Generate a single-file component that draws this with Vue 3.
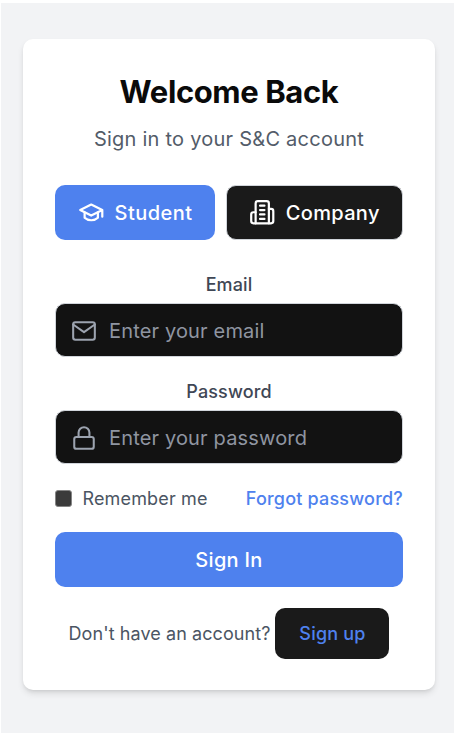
<script setup>
import { ref } from 'vue'

const role = ref('student')
const email = ref('')
const password = ref('')
const remember = ref(false)
</script>

<template>
  <main class="page">
    <section class="card">
      <h1 class="title">Welcome Back</h1>
      <p class="subtitle">Sign in to your S&amp;C account</p>

      <div class="roles">
        <button type="button" class="role student" @click="role = 'student'">
          <svg class="icon" viewBox="0 0 24 24">
            <path d="M22 10v6M2 10l10-5 10 5-10 5z" />
            <path d="M6 12v5c3 3 9 3 12 0v-5" />
          </svg>
          <span>Student</span>
        </button>
        <button type="button" class="role company" @click="role = 'company'">
          <svg class="icon" viewBox="0 0 24 24">
            <path d="M6 22V4a2 2 0 0 1 2-2h8a2 2 0 0 1 2 2v18Z" />
            <path d="M6 12H4a2 2 0 0 0-2 2v6a2 2 0 0 0 2 2h2" />
            <path d="M18 9h2a2 2 0 0 1 2 2v9a2 2 0 0 1-2 2h-2" />
            <path d="M10 6h4M10 10h4M10 14h4M10 18h4" />
          </svg>
          <span>Company</span>
        </button>
      </div>

      <form @submit.prevent>
        <label class="label" for="email">Email</label>
        <div class="field">
          <svg class="icon" viewBox="0 0 24 24">
            <rect x="2" y="4" width="20" height="16" rx="2" />
            <path d="m22 6-10 7L2 6" />
          </svg>
          <input id="email" v-model="email" type="email" placeholder="Enter your email" />
        </div>

        <label class="label second" for="password">Password</label>
        <div class="field">
          <svg class="icon" viewBox="0 0 24 24">
            <rect x="3" y="11" width="18" height="11" rx="2" />
            <path d="M7 11V7a5 5 0 0 1 10 0v4" />
          </svg>
          <input id="password" v-model="password" type="password" placeholder="Enter your password" />
        </div>

        <div class="options">
          <label class="remember">
            <input v-model="remember" type="checkbox" />
            <span>Remember me</span>
          </label>
          <a class="forgot">Forgot password?</a>
        </div>

        <button type="submit" class="submit">Sign In</button>
      </form>

      <div class="signup">
        <span class="question">Don't have an account?</span>
        <button type="button" class="signup-button">Sign up</button>
      </div>
    </section>
  </main>
</template>

<style>
body {
  background: #fff;
}
</style>

<style scoped>
* {
  box-sizing: border-box;
}
.page {
  width: 453px;
  height: 730px;
  margin: 3px 0 0 1px;
  padding: 36px 19px 0 22px;
  background: #f2f3f5;
  font-family: Inter, "Liberation Sans", sans-serif;
  display: flex;
  align-items: flex-start;
}
.card {
  width: 412px;
  height: 651px;
  padding: 0 32px;
  border-radius: 10px;
  background: #fff;
  box-shadow: 0 4px 7px -1px rgba(0, 0, 0, 0.12), 0 2px 4px -2px rgba(0, 0, 0, 0.12);
}
.title {
  margin: 34px 0 0;
  font-size: 31px;
  line-height: 38px;
  font-weight: 700;
  letter-spacing: -0.4px;
  text-align: center;
  color: #0a0a0a;
}
.subtitle {
  margin: 15px 0 0;
  font-size: 20px;
  line-height: 26px;
  letter-spacing: 0.24px;
  text-align: center;
  color: #535c69;
}
.roles {
  display: flex;
  gap: 11px;
  margin-top: 33px;
  height: 55px;
}
button {
  font-family: inherit;
  font-weight: 500;
  border: 0;
  margin: 0;
}
.role {
  display: flex;
  align-items: center;
  justify-content: center;
  gap: 10.5px;
  padding: 0;
  border-radius: 10px;
  color: #fff;
  font-size: 20px;
  letter-spacing: 0.45px;
}
.icon {
  width: 26.5px;
  height: 26.5px;
  flex: none;
  fill: none;
  stroke: currentColor;
  stroke-width: 2;
  stroke-linecap: round;
  stroke-linejoin: round;
}
.student {
  width: 160px;
  background: #4e81ee;
}
.company {
  width: 176.5px;
  background: #1a1a1a;
  border: 1px solid #d1d5db;
  letter-spacing: 0.35px;
}
.label {
  display: block;
  margin-top: 33px;
  font-size: 18px;
  line-height: 24px;
  font-weight: 500;
  letter-spacing: 0.12px;
  text-align: center;
  color: #3f4755;
}
.label.second {
  margin-top: 23px;
}
.field {
  height: 54px;
  margin-top: 6px;
  padding: 1px 0 0 15px;
  display: flex;
  align-items: center;
  gap: 12px;
  border: 1px solid #d1d5db;
  border-radius: 10px;
  background: #121212;
  color: #9ca3af;
}
.field .icon {
  width: 26px;
  height: 26px;
  stroke-width: 1.9;
}
.field input {
  flex: 1;
  min-width: 0;
  padding: 1px 0 0;
  border: 0;
  outline: 0;
  background: transparent;
  color: #fff;
  font-family: inherit;
  font-size: 20px;
  letter-spacing: 0.16px;
}
.field input::placeholder {
  color: #8f95a1;
}
.options {
  height: 24px;
  margin-top: 22px;
  display: flex;
  align-items: center;
  justify-content: space-between;
  font-size: 18px;
}
.remember {
  display: flex;
  align-items: center;
  gap: 10.5px;
  letter-spacing: 0.15px;
  color: #4b5563;
}
.remember input {
  appearance: none;
  width: 17px;
  height: 17px;
  margin: 0;
  border: 1px solid #858585;
  border-radius: 3px;
  background: #3b3b3b;
}
.forgot {
  font-weight: 500;
  letter-spacing: 0.2px;
  color: #4e81ee;
}
.submit {
  display: block;
  width: 100%;
  height: 55px;
  margin-top: 22px;
  border-radius: 10px;
  background: #4e81ee;
  color: #fff;
  font-size: 20px;
  letter-spacing: 0.3px;
}
.signup {
  margin-top: 21px;
  display: flex;
  align-items: center;
  justify-content: center;
  gap: 5px;
  font-size: 18px;
  letter-spacing: 0.08px;
  color: #4b5563;
}
.signup-button {
  width: 114px;
  height: 51px;
  padding: 0;
  border-radius: 10px;
  background: #1a1a1a;
  color: #4e81ee;
  font-size: 18px;
  letter-spacing: 0.2px;
}
</style>
